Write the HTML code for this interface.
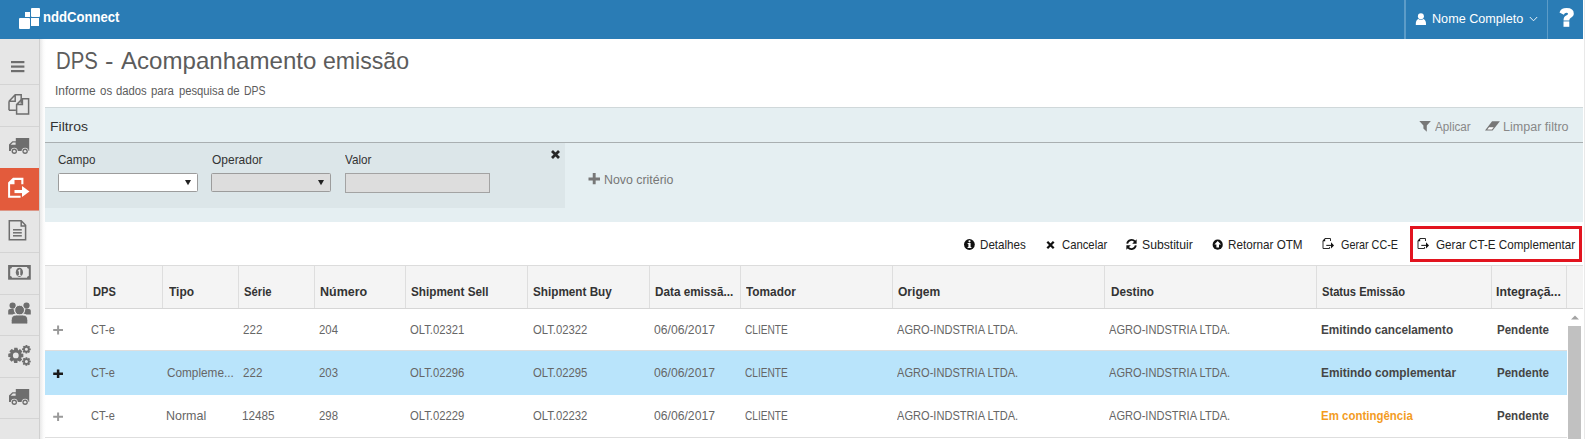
<!DOCTYPE html>
<html><head><meta charset="utf-8">
<style>
*{box-sizing:border-box;margin:0;padding:0}
html,body{width:1585px;height:439px;overflow:hidden;background:#fff;font-family:"Liberation Sans",sans-serif;color:#333}
.abs{position:absolute}
.tx{position:absolute;white-space:nowrap;transform-origin:0 0}
.r{position:absolute}
</style></head><body>
<!-- header -->
<div class="r" style="left:0;top:0;width:1583px;height:39px;background:#2a7cb5"></div>
<div class="r" style="left:19px;top:18px;width:11px;height:11px;background:#fff;border-radius:1px"></div>
<div class="r" style="left:24.5px;top:12px;width:5px;height:5px;background:#fff"></div>
<div class="r" style="left:31px;top:8px;width:9px;height:8.5px;background:#fff;border-radius:1px"></div>
<div class="r" style="left:31px;top:18px;width:7.5px;height:7.5px;background:#fff"></div>
<div class="r" style="left:1404px;top:0;width:1.6px;height:39px;background:#5c9cc8"></div>
<svg class="abs" style="left:1415px;top:13px" width="12" height="13" viewBox="0 0 12 13"><circle cx="5.9" cy="3.3" r="3" fill="#fff"/><path d="M0.8 12 Q0.5 6.6 3.4 5.9 Q5.9 7.6 8.4 5.9 Q11.3 6.6 11 12 Z" fill="#fff"/></svg>
<svg class="abs" style="left:1529px;top:16px" width="9" height="6" viewBox="0 0 9 6"><path d="M0.8 1 L4.5 4.8 L8.2 1" stroke="#fff" stroke-width="0.9" fill="none"/></svg>
<div class="r" style="left:1547px;top:0;width:1px;height:39px;background:#5c9cc8"></div>
<svg class="abs" style="left:1558px;top:7px" width="17" height="21" viewBox="0 0 17 21"><path d="M1.5 5.4 Q2.8 1.1 8.6 1.1 Q15.8 1.1 15.8 6.6 Q15.8 9.6 12.6 11 Q11.3 11.6 11.3 13.6 L5.5 13.6 Q5.5 9.8 8.2 8.6 Q10 7.8 10 6.8 Q10 5.7 8.4 5.7 Q6.6 5.7 5.8 7.7 Z" fill="#fff"/><rect x="5.5" y="14.4" width="5.8" height="5.4" fill="#fff"/></svg>
<div class="r" style="left:1584px;top:0;width:1px;height:439px;background:#e9e9e9"></div>
<!-- sidebar -->
<div class="r" style="left:0;top:39px;width:40px;height:400px;background:#e6e6e6;border-right:1px solid #d0d0d0"></div>
<svg class="abs" style="left:0;top:0" width="40" height="439" viewBox="0 0 40 439">
<rect x="0" y="84" width="39" height="1" fill="#d4d4d4"/>
<rect x="0" y="126" width="39" height="1" fill="#d4d4d4"/>
<rect x="0" y="168" width="39" height="1" fill="#d4d4d4"/>
<rect x="0" y="210" width="39" height="1" fill="#d4d4d4"/>
<rect x="0" y="252" width="39" height="1" fill="#d4d4d4"/>
<rect x="0" y="294" width="39" height="1" fill="#d4d4d4"/>
<rect x="0" y="335" width="39" height="1" fill="#d4d4d4"/>
<rect x="0" y="377" width="39" height="1" fill="#d4d4d4"/>
<rect x="0" y="418" width="39" height="1" fill="#d4d4d4"/>
<rect x="0" y="168" width="39" height="42.5" fill="#e35b3c"/>
<rect x="11" y="61" width="13.4" height="2.2" fill="#6e6e6e"/>
<rect x="11" y="65.5" width="13.4" height="2.2" fill="#6e6e6e"/>
<rect x="11" y="70" width="13.4" height="2.2" fill="#6e6e6e"/>
<path d="M9 101.2 L15.2 94.8 L21.2 94.8 L21.2 103.5 M15.9 110.2 L9 110.2 Z M9 101.2 L15.2 101.2 L15.2 94.8" stroke="#6e6e6e" stroke-width="1.5" fill="none" stroke-linejoin="miter"/>
<path d="M9 101.2 L9 110.2" stroke="#6e6e6e" stroke-width="1.5"/>
<path d="M16.6 104.6 L22.4 98.8 L28.6 98.8 L28.6 114 L16.6 114 Z M16.6 104.6 L22.4 104.6 L22.4 98.8" stroke="#6e6e6e" stroke-width="1.5" fill="none" stroke-linejoin="miter"/>
<path d="M15.8 138 L29.2 138 L29.2 151 L9 151 L9 144.6 L12.4 141.2 L15.8 141.2 Z" fill="#6e6e6e"/><path d="M10.7 144.8 L12.9 142.6 L15.6 142.6 L15.6 144.8 Z" fill="#e6e6e6"/><circle cx="14.3" cy="151.3" r="3.5" fill="#e6e6e6"/><circle cx="14.3" cy="151.3" r="2.7" fill="#6e6e6e"/><circle cx="14.3" cy="151.3" r="1.3" fill="#e6e6e6"/><circle cx="25.1" cy="151.3" r="3.5" fill="#e6e6e6"/><circle cx="25.1" cy="151.3" r="2.7" fill="#6e6e6e"/><circle cx="25.1" cy="151.3" r="1.3" fill="#e6e6e6"/>
<path d="M15.8 389 L29.2 389 L29.2 402 L9 402 L9 395.6 L12.4 392.2 L15.8 392.2 Z" fill="#6e6e6e"/><path d="M10.7 395.8 L12.9 393.6 L15.6 393.6 L15.6 395.8 Z" fill="#e6e6e6"/><circle cx="14.3" cy="402.3" r="3.5" fill="#e6e6e6"/><circle cx="14.3" cy="402.3" r="2.7" fill="#6e6e6e"/><circle cx="14.3" cy="402.3" r="1.3" fill="#e6e6e6"/><circle cx="25.1" cy="402.3" r="3.5" fill="#e6e6e6"/><circle cx="25.1" cy="402.3" r="2.7" fill="#6e6e6e"/><circle cx="25.1" cy="402.3" r="1.3" fill="#e6e6e6"/>
<path d="M13 177.8 L23.4 177.8 L23.4 184.2 L21.3 184.2 L21.3 180 L14.5 180 L14.5 184.2 L10.1 184.2 L10.1 195.7 L20.6 195.7 L20.6 197.7 L8.1 197.7 L8.1 182.6 Z" fill="#fff"/>
<rect x="14.5" y="190" width="8" height="3.1" fill="#fff"/>
<path d="M22 186.1 L29.5 191.5 L22 196.9 Z" fill="#fff"/>
<path d="M9.3 220.8 L21.2 220.8 L25.6 225.2 L25.6 239.8 L9.3 239.8 Z M21.2 220.8 L21.2 225.9 L25.6 225.9" stroke="#6e6e6e" stroke-width="1.5" fill="none"/>
<rect x="13" y="229.05" width="8.8" height="1.5" fill="#6e6e6e"/>
<rect x="13" y="232.05" width="8.8" height="1.5" fill="#6e6e6e"/>
<rect x="13" y="235.05" width="8.8" height="1.5" fill="#6e6e6e"/>
<rect x="8.1" y="265" width="22.7" height="14.7" fill="#6e6e6e"/>
<path d="M12 267 L27 267 Q27 268.8 28.8 268.8 L28.8 276 Q27 276 27 277.7 L12 277.7 Q12 276 10.2 276 L10.2 268.8 Q12 268.8 12 267 Z" fill="#e6e6e6"/>
<ellipse cx="19.4" cy="272.3" rx="3.6" ry="4.6" fill="#6e6e6e"/>
<path d="M18.2 270.2 L19.8 269.2 L20.3 269.2 L20.3 275.2 L21.4 275.2 L21.4 276 L17.6 276 L17.6 275.2 L18.9 275.2 L18.9 271.2 L18.2 271.6 Z" fill="#e6e6e6"/>
<circle cx="12.6" cy="305.6" r="3.1" fill="#6e6e6e"/><circle cx="26.5" cy="305.6" r="3.1" fill="#6e6e6e"/>
<path d="M8.2 314.4 L8.2 310.8 Q8.2 309 10 309 L13.5 309 Q14 312 15.6 313.5 Q13 314 12.6 314.4 Z" fill="#6e6e6e"/>
<path d="M30.8 314.4 L30.8 310.8 Q30.8 309 29 309 L25.5 309 Q25 312 23.4 313.5 Q26 314 26.4 314.4 Z" fill="#6e6e6e"/>
<circle cx="19.6" cy="310.1" r="4.9" fill="#6e6e6e" stroke="#e6e6e6" stroke-width="1"/>
<path d="M11.2 322.9 Q11.2 324 12.3 324 L26.7 324 Q27.8 324 27.8 322.9 L27.8 320.2 Q27.8 315 22.6 315 L16.4 315 Q11.2 315 11.2 320.2 Z" fill="#6e6e6e" stroke="#e6e6e6" stroke-width="0.9"/>
<path fill-rule="evenodd" d="M14.02 350.20 L14.21 347.87 L17.39 347.87 L18.22 350.46 L20.00 348.95 L22.25 351.20 L21.00 353.62 L23.33 353.81 L23.33 356.99 L20.74 357.82 L22.25 359.60 L20.00 361.85 L17.58 360.60 L17.39 362.93 L14.21 362.93 L13.38 360.34 L11.60 361.85 L9.35 359.60 L10.60 357.18 L8.27 356.99 L8.27 353.81 L10.86 352.98 L9.35 351.20 L11.60 348.95 Z M12.90 355.40 a2.90 2.90 0 1 0 5.80 0 a2.90 2.90 0 1 0 -5.80 0 Z" fill="#6e6e6e"/>
<path fill-rule="evenodd" d="M25.40 346.37 L25.58 344.98 L27.22 344.98 L27.76 346.52 L28.87 345.66 L30.04 346.83 L29.33 348.30 L30.72 348.48 L30.72 350.12 L29.18 350.66 L30.04 351.77 L28.87 352.94 L27.40 352.23 L27.22 353.62 L25.58 353.62 L25.04 352.08 L23.93 352.94 L22.76 351.77 L23.47 350.30 L22.08 350.12 L22.08 348.48 L23.62 347.94 L22.76 346.83 L23.93 345.66 Z M24.90 349.30 a1.50 1.50 0 1 0 3.00 0 a1.50 1.50 0 1 0 -3.00 0 Z" fill="#6e6e6e"/>
<path fill-rule="evenodd" d="M25.40 358.57 L25.58 357.18 L27.22 357.18 L27.76 358.72 L28.87 357.86 L30.04 359.03 L29.33 360.50 L30.72 360.68 L30.72 362.32 L29.18 362.86 L30.04 363.97 L28.87 365.14 L27.40 364.43 L27.22 365.82 L25.58 365.82 L25.04 364.28 L23.93 365.14 L22.76 363.97 L23.47 362.50 L22.08 362.32 L22.08 360.68 L23.62 360.14 L22.76 359.03 L23.93 357.86 Z M24.90 361.50 a1.50 1.50 0 1 0 3.00 0 a1.50 1.50 0 1 0 -3.00 0 Z" fill="#6e6e6e"/>
</svg>
<div class="r" style="left:40px;top:39px;width:6px;height:400px;background:linear-gradient(to right,#e9e9e9,#fbfbfb 60%,#fff)"></div>
<!-- filter section -->
<div class="r" style="left:45px;top:107px;width:1538px;height:115px;background:#e5eff2;border-top:1px solid #d0d8da"></div>
<div class="r" style="left:45px;top:142px;width:1538px;height:1px;background:#a9afb1"></div>
<div class="r" style="left:45px;top:143px;width:520px;height:64.5px;background:#dce6e9"></div>
<div class="r" style="left:58.4px;top:173.3px;width:139.3px;height:19.2px;background:#fff;border:1px solid #9c9c9c;border-radius:1.5px"></div>
<svg class="abs" style="left:184px;top:179px" width="8" height="7" viewBox="0 0 8 7"><path d="M1 1 L7 1 L4 6.2 Z" fill="#222"/></svg>
<div class="r" style="left:211.2px;top:173.3px;width:119.8px;height:19.2px;background:#ddd;border:1px solid #9c9c9c;border-radius:1.5px"></div>
<svg class="abs" style="left:317px;top:179px" width="8" height="7" viewBox="0 0 8 7"><path d="M1 1 L7 1 L4 6.2 Z" fill="#222"/></svg>
<div class="r" style="left:345.2px;top:173.2px;width:144.5px;height:19.6px;background:#ddd;border:1px solid #a3a3a3"></div>
<svg class="abs" style="left:550px;top:149px" width="11" height="11" viewBox="0 0 11 11"><path d="M2 2 L9 9 M9 2 L2 9" stroke="#262626" stroke-width="2.8"/></svg>
<svg class="abs" style="left:588px;top:173px" width="13" height="12" viewBox="0 0 13 12"><path d="M0.5 6 L12 6 M6.2 0 L6.2 11.2" stroke="#777" stroke-width="2.9"/></svg>
<svg class="abs" style="left:1418px;top:120px" width="14" height="13" viewBox="0 0 14 13"><path d="M1.3 1 L12.9 1 L8.8 5.6 L8.8 11.7 L5.4 8.6 L5.4 5.6 Z" fill="#777"/></svg>
<svg class="abs" style="left:1484px;top:120px" width="17" height="12" viewBox="0 0 17 12"><path d="M8.1 1.2 L15.9 1.2 L8.6 10.6 L1 10.6 Z" fill="#777"/><path d="M5.1 7.2 L9.7 7.2 L7.9 9.5 L3.3 9.5 Z" fill="#fff"/></svg>
<!-- toolbar -->
<svg class="abs" style="left:963px;top:238px" width="13" height="13" viewBox="0 0 13 13"><circle cx="6.4" cy="6.5" r="5.4" fill="#111"/><rect x="5.4" y="5" width="2.2" height="4.6" fill="#fff"/><rect x="4.6" y="9" width="3.8" height="1" fill="#fff"/><rect x="4.6" y="5" width="2" height="1" fill="#fff"/><circle cx="6.5" cy="3.3" r="1.1" fill="#fff"/></svg>
<svg class="abs" style="left:1045px;top:240px" width="11" height="10" viewBox="0 0 11 10"><path d="M2.3 1.8 L8.7 8.2 M8.7 1.8 L2.3 8.2" stroke="#111" stroke-width="2.3"/></svg>
<svg class="abs" style="left:1125px;top:238px" width="13" height="13" viewBox="0 0 13 13"><path d="M2.2 5.6 A4.4 4.4 0 0 1 10 3.6" stroke="#111" stroke-width="1.9" fill="none"/><path d="M11.6 1.2 L11.6 5.8 L7.2 5.8 Z" fill="#111"/><path d="M10.8 7.4 A4.4 4.4 0 0 1 3 9.4" stroke="#111" stroke-width="1.9" fill="none"/><path d="M1.4 11.8 L1.4 7.2 L5.8 7.2 Z" fill="#111"/></svg>
<svg class="abs" style="left:1211px;top:238px" width="13" height="13" viewBox="0 0 13 13"><circle cx="6.7" cy="6.7" r="5.1" fill="#111"/><path d="M6.7 3 L10 6.4 L8 6.4 L8 9.6 L5.4 9.6 L5.4 6.4 L3.4 6.4 Z" fill="#fff"/></svg>
<svg class="abs" style="left:1321px;top:237px" width="14" height="13" viewBox="0 0 14 13"><path d="M9.5 4 L9.5 1.5 L4 1.5 L2 3.9 L2 11.5 L8.6 11.5 L8.6 10" stroke="#2a2a2a" stroke-width="1" fill="none"/><path d="M1.6 4.2 L4.2 1.1 L4.2 4.2 Z" fill="#111"/><path d="M5.3 8.4 L10.4 8.4" stroke="#222" stroke-width="1.1"/><path d="M10 5.3 L13 8.4 L10 11.5 Z" fill="#111"/></svg>
<svg class="abs" style="left:1416px;top:237px" width="14" height="13" viewBox="0 0 14 13"><path d="M9.5 4 L9.5 1.5 L4 1.5 L2 3.9 L2 11.5 L8.6 11.5 L8.6 10" stroke="#2a2a2a" stroke-width="1" fill="none"/><path d="M1.6 4.2 L4.2 1.1 L4.2 4.2 Z" fill="#111"/><path d="M5.3 8.4 L10.4 8.4" stroke="#222" stroke-width="1.1"/><path d="M10 5.3 L13 8.4 L10 11.5 Z" fill="#111"/></svg>
<div class="r" style="left:1410px;top:226px;width:171.8px;height:35.6px;border:3px solid #e2141f"></div>
<!-- grid -->
<div class="r" style="left:45px;top:265px;width:1538px;height:1px;background:#dcdcdc"></div>
<div class="r" style="left:45px;top:266px;width:1538px;height:42px;background:#f4f4f4"></div>
<div class="r" style="left:45px;top:308px;width:1538px;height:1px;background:#d6d6d6"></div>
<div class="r" style="left:85.7px;top:266px;width:1px;height:42px;background:#dedede"></div><div class="r" style="left:161.9px;top:266px;width:1px;height:42px;background:#dedede"></div><div class="r" style="left:237.9px;top:266px;width:1px;height:42px;background:#dedede"></div><div class="r" style="left:313.8px;top:266px;width:1px;height:42px;background:#dedede"></div><div class="r" style="left:404.9px;top:266px;width:1px;height:42px;background:#dedede"></div><div class="r" style="left:526.9px;top:266px;width:1px;height:42px;background:#dedede"></div><div class="r" style="left:648.8px;top:266px;width:1px;height:42px;background:#dedede"></div><div class="r" style="left:739.7px;top:266px;width:1px;height:42px;background:#dedede"></div><div class="r" style="left:891.7px;top:266px;width:1px;height:42px;background:#dedede"></div><div class="r" style="left:1103.7px;top:266px;width:1px;height:42px;background:#dedede"></div><div class="r" style="left:1315.8px;top:266px;width:1px;height:42px;background:#dedede"></div><div class="r" style="left:1491.3px;top:266px;width:1px;height:42px;background:#dedede"></div><div class="r" style="left:1566.3px;top:266px;width:1px;height:42px;background:#dedede"></div>
<div class="r" style="left:45px;top:351px;width:1522px;height:43.6px;background:#b9e4fb"></div>
<div class="r" style="left:45px;top:350px;width:1522px;height:1px;background:#dedede"></div>
<div class="r" style="left:45px;top:437px;width:1522px;height:1px;background:#dedede"></div>
<svg class="abs" style="left:52px;top:324px" width="12" height="12" viewBox="0 0 12 12"><path d="M1.2 6 L11 6 M6.1 1.6 L6.1 10.4" stroke="#9a9a9a" stroke-width="2"/></svg>
<svg class="abs" style="left:52px;top:367.5px" width="12" height="12" viewBox="0 0 12 12"><path d="M1.2 5.8 L11 5.8 M6.1 1.6 L6.1 10" stroke="#1a1a1a" stroke-width="2.5"/></svg>
<svg class="abs" style="left:52px;top:410.5px" width="12" height="12" viewBox="0 0 12 12"><path d="M1.2 5.8 L11 5.8 M6.1 1.4 L6.1 10" stroke="#9a9a9a" stroke-width="2"/></svg>
<!-- scrollbar -->
<div class="r" style="left:1567px;top:309px;width:16px;height:130px;background:#fff"></div>
<svg class="abs" style="left:1569px;top:313px" width="12" height="8" viewBox="0 0 12 8"><path d="M2 6.5 L6 2.5 L10 6.5 Z" fill="#a3a3a3"/></svg>
<div class="r" style="left:1568.2px;top:326.3px;width:12.4px;height:113px;background:#c1c1c1"></div>
<div class="tx" style="left:42.80px;top:10.15px;font-size:14px;line-height:14px;font-weight:bold;color:#fff;transform:scaleX(0.9361)">nddConnect</div>
<div class="tx" style="left:1432.30px;top:12.00px;font-size:13px;line-height:13px;color:#fff;transform:scaleX(0.9707)">Nome Completo</div>
<div class="tx" style="left:55.79px;top:48.68px;font-size:24px;line-height:24px;color:#5c5c5c;transform:scaleX(0.8478)">DPS</div>
<div class="tx" style="left:104.90px;top:48.68px;font-size:24px;line-height:24px;color:#5c5c5c;transform:scaleX(1.0550)">-</div>
<div class="tx" style="left:121.00px;top:48.68px;font-size:24px;line-height:24px;color:#5c5c5c;transform:scaleX(1.0033)">Acompanhamento</div>
<div class="tx" style="left:323.20px;top:48.68px;font-size:24px;line-height:24px;color:#5c5c5c;transform:scaleX(0.9628)">emissão</div>
<div class="tx" style="left:54.90px;top:85.32px;font-size:12.5px;line-height:12.5px;color:#5c5c5c;transform:scaleX(0.9565)">Informe</div>
<div class="tx" style="left:100.00px;top:85.32px;font-size:12.5px;line-height:12.5px;color:#5c5c5c;transform:scaleX(0.9194)">os</div>
<div class="tx" style="left:115.90px;top:85.32px;font-size:12.5px;line-height:12.5px;color:#5c5c5c;transform:scaleX(0.9030)">dados</div>
<div class="tx" style="left:151.40px;top:85.32px;font-size:12.5px;line-height:12.5px;color:#5c5c5c;transform:scaleX(0.9166)">para</div>
<div class="tx" style="left:178.50px;top:85.32px;font-size:12.5px;line-height:12.5px;color:#5c5c5c;transform:scaleX(0.8982)">pesquisa</div>
<div class="tx" style="left:227.40px;top:85.32px;font-size:12.5px;line-height:12.5px;color:#5c5c5c;transform:scaleX(0.9162)">de</div>
<div class="tx" style="left:243.78px;top:85.32px;font-size:12.5px;line-height:12.5px;color:#5c5c5c;transform:scaleX(0.8393)">DPS</div>
<div class="tx" style="left:49.58px;top:119.57px;font-size:13.5px;line-height:13.5px;color:#333;transform:scaleX(1.0349)">Filtros</div>
<div class="tx" style="left:1434.90px;top:120.62px;font-size:12.5px;line-height:12.5px;color:#888;transform:scaleX(0.9356)">Aplicar</div>
<div class="tx" style="left:1502.89px;top:120.62px;font-size:12.5px;line-height:12.5px;color:#888;transform:scaleX(1.0042)">Limpar filtro</div>
<div class="tx" style="left:58.30px;top:153.20px;font-size:13px;line-height:13px;color:#333;transform:scaleX(0.8920)">Campo</div>
<div class="tx" style="left:211.70px;top:153.20px;font-size:13px;line-height:13px;color:#333;transform:scaleX(0.9209)">Operador</div>
<div class="tx" style="left:344.70px;top:153.20px;font-size:13px;line-height:13px;color:#333;transform:scaleX(0.8982)">Valor</div>
<div class="tx" style="left:603.59px;top:172.80px;font-size:13px;line-height:13px;color:#777;transform:scaleX(0.9511)">Novo critério</div>
<div class="tx" style="left:980.40px;top:238.30px;font-size:13px;line-height:13px;color:#222;transform:scaleX(0.8922)">Detalhes</div>
<div class="tx" style="left:1062.00px;top:238.30px;font-size:13px;line-height:13px;color:#222;transform:scaleX(0.8683)">Cancelar</div>
<div class="tx" style="left:1142.49px;top:238.30px;font-size:13px;line-height:13px;color:#222;transform:scaleX(0.9371)">Substituir</div>
<div class="tx" style="left:1228.09px;top:238.30px;font-size:13px;line-height:13px;color:#222;transform:scaleX(0.8978)">Retornar OTM</div>
<div class="tx" style="left:1340.90px;top:238.30px;font-size:13px;line-height:13px;color:#222;transform:scaleX(0.8303)">Gerar CC-E</div>
<div class="tx" style="left:1436.10px;top:238.30px;font-size:13px;line-height:13px;color:#222;transform:scaleX(0.8960)">Gerar CT-E Complementar</div>
<div class="tx" style="left:92.50px;top:285.00px;font-size:13px;line-height:13px;font-weight:bold;color:#333;transform:scaleX(0.8519)">DPS</div>
<div class="tx" style="left:168.70px;top:285.00px;font-size:13px;line-height:13px;font-weight:bold;color:#333;transform:scaleX(0.9181)">Tipo</div>
<div class="tx" style="left:243.90px;top:285.00px;font-size:13px;line-height:13px;font-weight:bold;color:#333;transform:scaleX(0.8673)">Série</div>
<div class="tx" style="left:319.58px;top:285.00px;font-size:13px;line-height:13px;font-weight:bold;color:#333;transform:scaleX(0.9609)">Número</div>
<div class="tx" style="left:411.40px;top:285.00px;font-size:13px;line-height:13px;font-weight:bold;color:#333;transform:scaleX(0.9024)">Shipment Sell</div>
<div class="tx" style="left:533.00px;top:285.00px;font-size:13px;line-height:13px;font-weight:bold;color:#333;transform:scaleX(0.9013)">Shipment Buy</div>
<div class="tx" style="left:655.40px;top:285.00px;font-size:13px;line-height:13px;font-weight:bold;color:#333;transform:scaleX(0.9015)">Data emissã...</div>
<div class="tx" style="left:746.20px;top:285.00px;font-size:13px;line-height:13px;font-weight:bold;color:#333;transform:scaleX(0.9107)">Tomador</div>
<div class="tx" style="left:898.00px;top:285.00px;font-size:13px;line-height:13px;font-weight:bold;color:#333;transform:scaleX(0.9266)">Origem</div>
<div class="tx" style="left:1110.50px;top:285.00px;font-size:13px;line-height:13px;font-weight:bold;color:#333;transform:scaleX(0.9015)">Destino</div>
<div class="tx" style="left:1322.10px;top:285.00px;font-size:13px;line-height:13px;font-weight:bold;color:#333;transform:scaleX(0.8570)">Status Emissão</div>
<div class="tx" style="left:1496.38px;top:285.00px;font-size:13px;line-height:13px;font-weight:bold;color:#333;transform:scaleX(0.9442)">Integraçã...</div>
<div class="tx" style="left:91.20px;top:322.90px;font-size:13px;line-height:13px;color:#666;transform:scaleX(0.8444)">CT-e</div>
<div class="tx" style="left:243.40px;top:322.90px;font-size:13px;line-height:13px;color:#666;transform:scaleX(0.8927)">222</div>
<div class="tx" style="left:319.40px;top:322.90px;font-size:13px;line-height:13px;color:#666;transform:scaleX(0.8748)">204</div>
<div class="tx" style="left:410.10px;top:322.90px;font-size:13px;line-height:13px;color:#666;transform:scaleX(0.8681)">OLT.02321</div>
<div class="tx" style="left:532.50px;top:322.90px;font-size:13px;line-height:13px;color:#666;transform:scaleX(0.8681)">OLT.02322</div>
<div class="tx" style="left:654.40px;top:322.90px;font-size:13px;line-height:13px;color:#666;transform:scaleX(0.9370)">06/06/2017</div>
<div class="tx" style="left:745.20px;top:322.90px;font-size:13px;line-height:13px;color:#666;transform:scaleX(0.7792)">CLIENTE</div>
<div class="tx" style="left:897.30px;top:322.90px;font-size:13px;line-height:13px;color:#666;transform:scaleX(0.8530)">AGRO-INDSTRIA LTDA.</div>
<div class="tx" style="left:1109.20px;top:322.90px;font-size:13px;line-height:13px;color:#666;transform:scaleX(0.8530)">AGRO-INDSTRIA LTDA.</div>
<div class="tx" style="left:1321.30px;top:322.90px;font-size:13px;line-height:13px;font-weight:bold;color:#454545;transform:scaleX(0.9058)">Emitindo cancelamento</div>
<div class="tx" style="left:1496.90px;top:322.90px;font-size:13px;line-height:13px;font-weight:bold;color:#454545;transform:scaleX(0.8883)">Pendente</div>
<div class="tx" style="left:91.20px;top:365.80px;font-size:13px;line-height:13px;color:#666;transform:scaleX(0.8444)">CT-e</div>
<div class="tx" style="left:167.20px;top:365.80px;font-size:13px;line-height:13px;color:#666;transform:scaleX(0.9061)">Compleme...</div>
<div class="tx" style="left:243.40px;top:365.80px;font-size:13px;line-height:13px;color:#666;transform:scaleX(0.8927)">222</div>
<div class="tx" style="left:319.40px;top:365.80px;font-size:13px;line-height:13px;color:#666;transform:scaleX(0.8748)">203</div>
<div class="tx" style="left:410.10px;top:365.80px;font-size:13px;line-height:13px;color:#666;transform:scaleX(0.8681)">OLT.02296</div>
<div class="tx" style="left:532.50px;top:365.80px;font-size:13px;line-height:13px;color:#666;transform:scaleX(0.8681)">OLT.02295</div>
<div class="tx" style="left:654.40px;top:365.80px;font-size:13px;line-height:13px;color:#666;transform:scaleX(0.9370)">06/06/2017</div>
<div class="tx" style="left:745.20px;top:365.80px;font-size:13px;line-height:13px;color:#666;transform:scaleX(0.7792)">CLIENTE</div>
<div class="tx" style="left:897.30px;top:365.80px;font-size:13px;line-height:13px;color:#666;transform:scaleX(0.8530)">AGRO-INDSTRIA LTDA.</div>
<div class="tx" style="left:1109.20px;top:365.80px;font-size:13px;line-height:13px;color:#666;transform:scaleX(0.8530)">AGRO-INDSTRIA LTDA.</div>
<div class="tx" style="left:1321.30px;top:365.80px;font-size:13px;line-height:13px;font-weight:bold;color:#454545;transform:scaleX(0.9116)">Emitindo complementar</div>
<div class="tx" style="left:1496.90px;top:365.80px;font-size:13px;line-height:13px;font-weight:bold;color:#454545;transform:scaleX(0.8883)">Pendente</div>
<div class="tx" style="left:91.20px;top:409.10px;font-size:13px;line-height:13px;color:#666;transform:scaleX(0.8444)">CT-e</div>
<div class="tx" style="left:166.18px;top:409.10px;font-size:13px;line-height:13px;color:#666;transform:scaleX(0.9595)">Normal</div>
<div class="tx" style="left:242.40px;top:409.10px;font-size:13px;line-height:13px;color:#666;transform:scaleX(0.9010)">12485</div>
<div class="tx" style="left:319.40px;top:409.10px;font-size:13px;line-height:13px;color:#666;transform:scaleX(0.8748)">298</div>
<div class="tx" style="left:410.10px;top:409.10px;font-size:13px;line-height:13px;color:#666;transform:scaleX(0.8681)">OLT.02229</div>
<div class="tx" style="left:532.50px;top:409.10px;font-size:13px;line-height:13px;color:#666;transform:scaleX(0.8681)">OLT.02232</div>
<div class="tx" style="left:654.40px;top:409.10px;font-size:13px;line-height:13px;color:#666;transform:scaleX(0.9370)">06/06/2017</div>
<div class="tx" style="left:745.20px;top:409.10px;font-size:13px;line-height:13px;color:#666;transform:scaleX(0.7792)">CLIENTE</div>
<div class="tx" style="left:897.30px;top:409.10px;font-size:13px;line-height:13px;color:#666;transform:scaleX(0.8530)">AGRO-INDSTRIA LTDA.</div>
<div class="tx" style="left:1109.20px;top:409.10px;font-size:13px;line-height:13px;color:#666;transform:scaleX(0.8530)">AGRO-INDSTRIA LTDA.</div>
<div class="tx" style="left:1321.30px;top:409.10px;font-size:13px;line-height:13px;font-weight:bold;color:#f39c1f;transform:scaleX(0.8823)">Em contingência</div>
<div class="tx" style="left:1496.90px;top:409.10px;font-size:13px;line-height:13px;font-weight:bold;color:#454545;transform:scaleX(0.8883)">Pendente</div>
</body></html>
